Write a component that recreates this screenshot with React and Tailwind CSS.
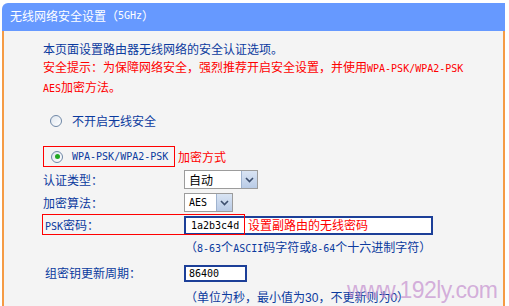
import React from "react";

const mono = "font-['DejaVu_Sans_Mono',monospace] text-[10px]";

function Radio({ checked }) {
  return (
    <span className="flex h-[12px] w-[12px] items-center justify-center rounded-full border border-[#6f87a6] bg-gradient-to-br from-[#dfe6ee] to-white">
      {checked && <span className="h-[5px] w-[5px] rounded-full bg-[#22a822]" />}
    </span>
  );
}

function Select({ value, width, ascii }) {
  return (
    <div className={`flex h-full items-stretch border border-[#9c9c9c] bg-white ${width}`}>
      <span className={`flex flex-1 items-center pl-[4px] text-black ${ascii ? mono : ""}`}>{value}</span>
      <span className="flex w-[16px] items-center justify-center border-l border-[#9fb3cf] bg-gradient-to-b from-[#d9e4f3] to-[#b9cbe6]">
        <svg width="9" height="6" viewBox="0 0 9 6">
          <path d="M1 1 L4.5 4.5 L8 1" fill="none" stroke="#3d4f6e" strokeWidth="1.6" />
        </svg>
      </span>
    </div>
  );
}

export default function App() {
  return (
    <div className="min-h-screen overflow-hidden bg-white pl-[2px] pt-[3px] font-['Noto_Sans_CJK_SC',sans-serif] text-[12px]">
      <div className="relative w-[503px]">
        {/* header */}
        <div className="flex h-[28px] items-center rounded-tl-[6px] bg-[#6699ff] pb-[3px] pl-[8px] text-white">
          无线网络安全设置（<span className={mono}>5GHz</span>）
        </div>

        {/* body */}
        <div className="h-[275px] border-x-2 border-[#f59b45] bg-[#f4f4f4] pl-[39px] pt-[9px] text-[#0b3a9e]">
          <div className="leading-[18px]">
            <div>本页面设置路由器无线网络的安全认证选项。</div>
            <div className="text-[#ff0000]">
              安全提示：为保障网络安全，强烈推荐开启安全设置，并使用<span className={mono}>WPA-PSK/WPA2-PSK</span>
              <br />
              <span className={mono}>AES</span>加密方法。
            </div>
          </div>

          <div className="mt-[13px] flex h-[20px] items-center pl-[7px]">
            <Radio />
            <span className="ml-[10px]">不开启无线安全</span>
          </div>

          <div className="mt-[15px] flex items-center">
            <div className="flex h-[21px] w-[132px] items-center border border-[#ff0000] pl-[7px]">
              <Radio checked />
              <span className={`ml-[9px] ${mono}`}>WPA-PSK/WPA2-PSK</span>
            </div>
            <span className="ml-[3px] text-[#ff0000]">加密方式</span>
          </div>

          <div className="mt-[3px] flex h-[19px] items-center">
            <span className="w-[141px]">认证类型：</span>
            <Select value="自动" width="w-[74px]" />
          </div>

          <div className="mt-[4px] flex h-[19px] items-center">
            <span className="w-[141px]">加密算法：</span>
            <Select value="AES" width="w-[49px]" ascii />
          </div>

          <div className="relative mt-[2px] flex h-[22px] items-center">
            <span className="w-[141px] pl-[2px]">
              <span className={mono}>PSK</span>密码：
            </span>
            <div className="flex h-[19px] w-[249px] items-center border-2 border-[#1c3f98] bg-white pl-[5px]">
              <span className={`w-[57px] text-black ${mono}`}>1a2b3c4d</span>
              <span className="text-[#ff0000]">设置副路由的无线密码</span>
            </div>
            <div className="pointer-events-none absolute left-[-1px] top-0 h-[21px] w-[203px] border border-[#ff0000]" />
          </div>

          <div className="ml-[142px] mt-[2px] h-[18px] leading-[18px]">
            （<span className={mono}>8-63</span>个<span className={mono}>ASCII</span>码字符或<span className={mono}>8-64</span>个十六进制字符）
          </div>

          <div className="mt-[8px] flex h-[18px] items-center">
            <span className="w-[141px] pl-[2px]">组密钥更新周期：</span>
            <div className="flex h-[17px] w-[63px] items-center border-2 border-[#1c3f98] bg-white pl-[3px] text-black">
              <span className={mono}>86400</span>
            </div>
          </div>

          <div className="ml-[142px] mt-[6px] h-[18px] leading-[18px]">
            （单位为秒，最小值为<span className="font-['Liberation_Sans',sans-serif]">30</span>，不更新则为<span className="font-['Liberation_Sans',sans-serif]">0</span>）
          </div>
        </div>

        {/* watermark */}
        <div className="pointer-events-none absolute left-[345px] top-[276px] font-['Liberation_Sans',sans-serif] text-[23px] leading-none tracking-[-0.6px] text-[#c48fcf]/70">
          www.192ly.com
        </div>
      </div>
    </div>
  );
}
